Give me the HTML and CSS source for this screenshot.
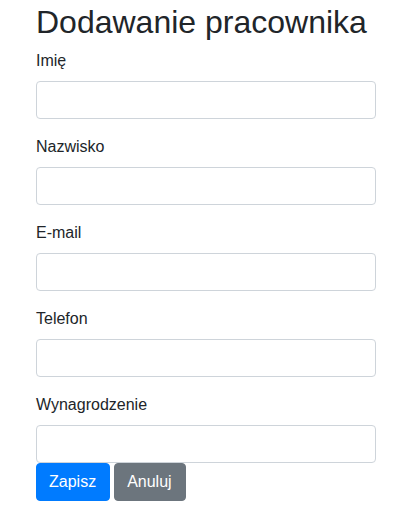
FILE: index.html
```html
<!DOCTYPE html>
<html lang="pl">
<head>
<meta charset="utf-8">
<title>Dodawanie pracownika</title>
<link rel="stylesheet" href="styles.css">
</head>
<body>
<main class="page">
  <h1 class="title">Dodawanie pracownika</h1>
  <form class="form">
    <div class="group">
      <label class="label" for="imie">Imię</label>
      <input class="input" id="imie" type="text">
    </div>
    <div class="group">
      <label class="label" for="nazwisko">Nazwisko</label>
      <input class="input" id="nazwisko" type="text">
    </div>
    <div class="group">
      <label class="label" for="email">E-mail</label>
      <input class="input" id="email" type="text">
    </div>
    <div class="group">
      <label class="label" for="telefon">Telefon</label>
      <input class="input" id="telefon" type="text">
    </div>
    <div class="group group-last">
      <label class="label" for="wyn">Wynagrodzenie</label>
      <input class="input" id="wyn" type="text">
    </div>
    <div class="actions">
      <button class="btn btn-primary" type="button">Zapisz</button>
      <button class="btn btn-secondary" type="button">Anuluj</button>
    </div>
  </form>
</main>
</body>
</html>
```
FILE: styles.css
```css
html, body {
  margin: 0;
  padding: 0;
  background: #fff;
}
body {
  font-family: "Liberation Sans", Arial, sans-serif;
  font-size: 16px;
  line-height: 1.5;
  color: #212529;
}
.page {
  padding: 3px 26px 0 36px;
}
.title {
  margin: 0 0 8px 0;
  font-size: 32px;
  font-weight: 400;
  line-height: 38px;
  color: #212529;
}
.form {
  margin: 0;
}
.group {
  display: flex;
  flex-direction: column;
  margin-bottom: 16px;
}
.group-last {
  margin-bottom: 0;
}
.label {
  display: block;
  margin-bottom: 8px;
  line-height: 24px;
}
.input {
  box-sizing: border-box;
  display: block;
  width: 100%;
  height: 38px;
  padding: 6px 12px;
  font-family: inherit;
  font-size: 16px;
  line-height: 1.5;
  color: #495057;
  background: #fff;
  border: 1px solid #ced4da;
  border-radius: 4px;
  margin: 0;
}
.actions {
  display: flex;
  gap: 4px;
}
.btn {
  box-sizing: border-box;
  height: 38px;
  padding: 6px 13px 6px 12px;
  font-family: inherit;
  font-size: 16px;
  line-height: 24px;
  color: #fff;
  border: 1px solid transparent;
  border-radius: 4px;
  margin: 0;
  cursor: pointer;
}
.btn-primary {
  background: #007bff;
  border-color: #007bff;
}
.btn-secondary {
  background: #6c757d;
  border-color: #6c757d;
}
```
